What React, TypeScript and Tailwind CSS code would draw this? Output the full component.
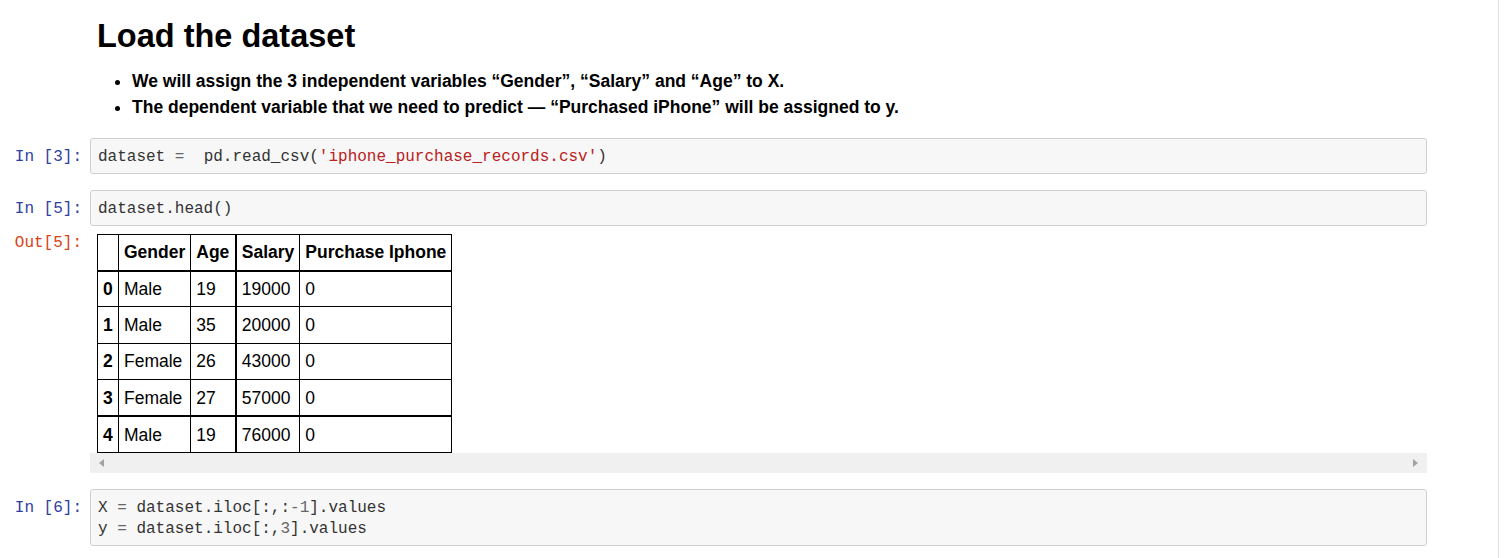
const mono = { fontFamily: "'Liberation Mono', 'DejaVu Sans Mono', monospace" };

type Row = { idx: number; gender: string; age: number; salary: number; bought: number };

const rows: Row[] = [
  { idx: 0, gender: "Male", age: 19, salary: 19000, bought: 0 },
  { idx: 1, gender: "Male", age: 35, salary: 20000, bought: 0 },
  { idx: 2, gender: "Female", age: 26, salary: 43000, bought: 0 },
  { idx: 3, gender: "Female", age: 27, salary: 57000, bought: 0 },
  { idx: 4, gender: "Male", age: 19, salary: 76000, bought: 0 },
];

const Prompt = ({ label, out }: { label: string; out?: boolean }) => (
  <div
    className={`w-[90px] shrink-0 pr-[8px] text-right text-[16px] ${
      out ? "pt-[0px] leading-[19px] text-[#d84315]" : "pt-[9px] leading-[21px] text-[#303f9f]"
    }`}
    style={{ fontFamily: "'Liberation Mono', monospace" }}
  >
    {label}
  </div>
);

const CodeCell = ({ label, children }: { label: string; children: React.ReactNode }) => (
  <div className="flex pr-[71px]">
    <Prompt label={label} />
    <div
      className="flex-1 rounded-[3px] border border-[#cfcfcf] bg-[#f7f7f7] pl-[7px] pt-[8px] pb-[5px] text-[16px] leading-[21px] whitespace-pre text-[#333]"
      style={mono}
    >
      {children}
    </div>
  </div>
);

const Op = ({ children }: { children: React.ReactNode }) => <span className="text-[#666]">{children}</span>;

export default function App() {
  return (
    <div className="min-h-[558px] w-[1499px] border-r border-[#e0e0e8] bg-white text-black" style={{ fontFamily: "'Liberation Sans', Arial, sans-serif" }}>
      <div className="pl-[97px] pt-[16px]">
        <h1 className="text-[32.5px] font-bold leading-[40px]">Load the dataset</h1>
        <ul className="mt-[12px] list-disc pl-[35px] text-[17.5px] font-bold leading-[26px]">
          <li>We will assign the 3 independent variables “Gender”, “Salary” and “Age” to X.</li>
          <li>The dependent variable that we need to predict — “Purchased iPhone” will be assigned to y.</li>
        </ul>
      </div>

      <div className="mt-[18px]">
        <CodeCell label="In [3]:">
          dataset <Op>=</Op>  pd.read_csv(<span className="text-[#ba2121]">'iphone_purchase_records.csv'</span>)
        </CodeCell>
      </div>

      <div className="mt-[16px]">
        <CodeCell label="In [5]:">dataset.head()</CodeCell>
      </div>

      <div className="mt-[8px] flex pr-[71px]">
        <Prompt label="Out[5]:" out />
        <div className="flex-1">
          <div className="pl-[7px]">
            <table className="border-collapse whitespace-nowrap text-[17.5px] leading-[24px]">
              <thead>
                <tr className="h-[36px]">
                  <th className="w-[21px] border border-b-2 border-black"></th>
                  <th className="w-[72px] border border-b-2 border-black px-[5px] text-left">Gender</th>
                  <th className="w-[45px] border border-b-2 border-black px-[5px] text-left">Age</th>
                  <th className="w-[63px] border border-b-2 border-l-2 border-black px-[5px] text-left">Salary</th>
                  <th className="w-[151px] border border-b-2 border-black px-[5px] text-left">Purchase Iphone</th>
                </tr>
              </thead>
              <tbody>
                {rows.map((r) => {
                  const top = r.idx === 4 ? "border-t-2" : "";
                  return (
                    <tr key={r.idx} className="h-[36.4px]">
                      <td className={`border border-black px-[5px] font-bold ${top}`}>{r.idx}</td>
                      <td className={`border border-black px-[5px] ${top}`}>{r.gender}</td>
                      <td className={`border border-black px-[5px] ${top}`}>{r.age}</td>
                      <td className={`border border-l-2 border-black px-[5px] ${top}`}>{r.salary}</td>
                      <td className={`border border-black px-[5px] ${top}`}>{r.bought}</td>
                    </tr>
                  );
                })}
              </tbody>
            </table>
          </div>
          <div className="flex h-[20px] items-center justify-between bg-[#f0f0f0] px-[9px]">
            <span className="h-0 w-0 border-y-[4px] border-r-[5px] border-y-transparent border-r-[#a3a3a3]" />
            <span className="h-0 w-0 border-y-[4px] border-l-[5px] border-y-transparent border-l-[#a3a3a3]" />
          </div>
        </div>
      </div>

      <div className="mt-[16px]">
        <CodeCell label="In [6]:">
          {"X "}<Op>=</Op>{" dataset.iloc[:,:"}<Op>-1</Op>{"].values\n"}
          {"y "}<Op>=</Op>{" dataset.iloc[:,"}<Op>3</Op>{"].values"}
        </CodeCell>
      </div>
    </div>
  );
}
